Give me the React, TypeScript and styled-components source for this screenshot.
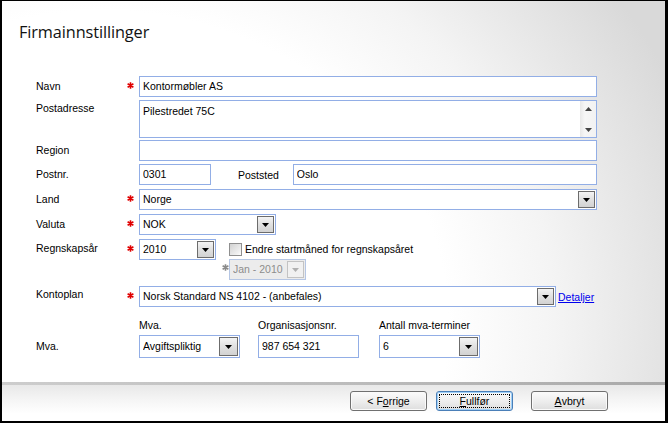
import React from "react";
import styled, { createGlobalStyle } from "styled-components";

const Global = createGlobalStyle`
  html, body { margin: 0; padding: 0; background: #fff; }
  body { font-family: "Liberation Sans", Arial, sans-serif; font-size: 10.5px; color: #000; }
  * { box-sizing: border-box; }
`;

const Window = styled.div`
  width: 668px;
  height: 423px;
  border-style: solid;
  border-color: #000;
  border-width: 1px 3px 2px 2px;
  display: flex;
  flex-direction: column;
  overflow: hidden;
`;

const Main = styled.div`
  flex: 1;
  background: radial-gradient(ellipse 95% 150% at 15% 85%, #ffffff 55%, #f4f4f4 72%, #d9d9d9 100%);
  display: flex;
  flex-direction: column;
`;

const Title = styled.h1`
  margin: 0;
  height: 75px;
  padding: 20px 0 0 17px;
  font-family: "Open Sans", "Noto Sans", sans-serif;
  font-weight: 400;
  font-size: 16.3px;
  letter-spacing: -0.1px;
  color: #111;
`;

const Form = styled.div`
  padding-left: 34px;
  width: 595px;
  display: flex;
  flex-direction: column;
`;

const Row = styled.div<{ $mt: number }>`
  display: grid;
  grid-template-columns: 94px 9px 1fr;
  margin-top: ${(p) => p.$mt}px;
`;

const Label = styled.div<{ $align?: string; $pt?: number; $pb?: number }>`
  align-self: ${(p) => p.$align || "center"};
  padding-top: ${(p) => p.$pt || 0}px;
  padding-bottom: ${(p) => p.$pb || 0}px;
  line-height: 13px;
  white-space: nowrap;
`;

const Star = styled.span`
  align-self: start;
  display: block;
  width: 7px;
  height: 7px;
  margin-top: 3px;
  margin-left: -3px;
`;

const Controls = styled.div<{ $align?: string }>`
  display: flex;
  align-items: ${(p) => p.$align || "center"};
`;

const Field = styled.div<{ $w?: number; $h?: number; $disabled?: boolean; $ml?: number }>`
  ${(p) => (p.$w ? `width: ${p.$w}px;` : "flex: 1;")}
  height: ${(p) => p.$h || 21}px;
  margin-left: ${(p) => p.$ml || 0}px;
  border: 1px solid ${(p) => (p.$disabled ? "#b5c6e4" : "#92aee6")};
  background: ${(p) => (p.$disabled ? "#ececec" : "#fff")};
  color: ${(p) => (p.$disabled ? "#8d8d8d" : "#000")};
  display: flex;
  align-items: center;
  padding: 0 1px 0 3px;
  line-height: 13px;
  white-space: nowrap;
`;

const FieldText = styled.span`
  flex: 1;
  overflow: hidden;
`;

const TextArea = styled(Field)`
  align-items: stretch;
  padding: 0 0 0 3px;
`;

const AreaText = styled.span`
  flex: 1;
  padding-top: 4px;
`;

const ScrollBar = styled.div`
  width: 16px;
  background: linear-gradient(to right, #e8e8e8, #f6f6f6 30%, #f2f2f2);
  display: flex;
  flex-direction: column;
  justify-content: space-between;
  align-items: center;
  padding: 6px 0 5px;
`;

const DropBtn = styled.div<{ $disabled?: boolean; $size?: number }>`
  width: ${(p) => p.$size || 17}px;
  height: ${(p) => p.$size || 17}px;
  border: 1px solid ${(p) => (p.$disabled ? "#c3c3c3" : "#6c6c6c")};
  background: ${(p) =>
    p.$disabled ? "#f1f1f1" : "linear-gradient(#f4f4f4, #e2e2e2 45%, #d2d2d2)"};
  display: flex;
  align-items: center;
  justify-content: center;
  padding-top: 1px;
`;

const Inline = styled.span<{ $ml: number }>`
  margin-left: ${(p) => p.$ml}px;
  white-space: nowrap;
`;

const RightBlock = styled.div`
  display: flex;
  flex-direction: column;
  margin-left: 6px;
`;

const CheckLine = styled.div`
  height: 20px;
  display: flex;
  align-items: center;
  padding-left: 7px;
  gap: 3px;
`;

const CheckBox = styled.div`
  width: 13px;
  height: 13px;
  border: 1px solid #8f8f8f;
  background: linear-gradient(135deg, #d2d2d2, #f2f2f2 80%, #fff);
`;

const SubLine = styled.div`
  display: flex;
  align-items: flex-start;
`;

const SmallStar = styled.span`
  width: 7px;
  margin-top: 2px;
`;

const Link = styled.a`
  color: #0000ee;
  text-decoration: underline;
  margin-left: 2px;
  padding-top: 5px;
  line-height: 13px;
`;

const Groups = styled.div`
  display: flex;
`;

const Group = styled.div<{ $ml: number }>`
  display: flex;
  flex-direction: column;
  margin-left: ${(p) => p.$ml}px;
`;

const Caption = styled.div`
  line-height: 13px;
  height: 16px;
`;

const Spacer = styled.div`
  flex: 1;
`;

const Separator = styled.div`
  height: 3px;
  background: linear-gradient(to right, #cdcdcd, #b9b9b9 60%, #a9a9a9);
`;

const Footer = styled.div`
  height: 36px;
  background: linear-gradient(#e8e8e8, #f6f6f6 45%, #fff 80%);
  display: flex;
  justify-content: flex-end;
  align-items: flex-start;
  padding: 6px 57px 0 0;
`;

const Button = styled.button<{ $ml: number; $focus?: boolean }>`
  width: 77px;
  height: 20px;
  margin-left: ${(p) => p.$ml}px;
  border: 1px solid ${(p) => (p.$focus ? "#4a7fb8" : "#707070")};
  border-radius: 3px;
  background: linear-gradient(#fbfbfb, #eeeeee 50%, #dedede);
  box-shadow: ${(p) => (p.$focus ? "inset 0 0 0 1px #9fd0f8" : "inset 0 0 0 1px #fafafa")};
  font-family: "Liberation Sans", Arial, sans-serif;
  font-size: 10.5px;
  color: #000;
  padding: 2px;
  display: flex;
`;

const BtnInner = styled.span<{ $focus?: boolean }>`
  flex: 1;
  display: flex;
  align-items: center;
  justify-content: center;
  border: 1px dotted ${(p) => (p.$focus ? "#000" : "transparent")};
  line-height: 12px;
`;

const Tri = ({ color = "#000", up = false }: { color?: string; up?: boolean }) => (
  <svg width="7" height="4" viewBox="0 0 7 4">
    {up ? <path d="M3.5 0 L7 4 L0 4 Z" fill={color} /> : <path d="M0 0 L7 0 L3.5 4 Z" fill={color} />}
  </svg>
);

const AsteriskIcon = ({ color }: { color: string }) => (
  <svg width="7" height="7" viewBox="0 0 7 7">
    <path d="M3.5 0.2 V6.8 M0.6 1.8 L6.4 5.2 M0.6 5.2 L6.4 1.8" stroke={color} strokeWidth="1.6" />
  </svg>
);

const Combo = ({
  value,
  w,
  h,
  disabled,
}: {
  value: string;
  w?: number;
  h?: number;
  disabled?: boolean;
}) => (
  <Field $w={w} $h={h} $disabled={disabled}>
    <FieldText>{value}</FieldText>
    <DropBtn $disabled={disabled} $size={h ? h - 4 : 17}>
      <Tri color={disabled ? "#b0b0b0" : "#000"} />
    </DropBtn>
  </Field>
);

const Req = () => (
  <Star>
    <AsteriskIcon color="#e00000" />
  </Star>
);

export default function App() {
  return (
    <>
      <Global />
      <Window>
        <Main>
          <Title>Firmainnstillinger</Title>
          <Form>
            <Row $mt={0}>
              <Label>Navn</Label>
              <Req />
              <Field>
                <FieldText>Kontormøbler AS</FieldText>
              </Field>
            </Row>
            <Row $mt={3}>
              <Label $align="start" $pt={2}>Postadresse</Label>
              <span />
              <TextArea $h={38}>
                <AreaText>Pilestredet 75C</AreaText>
                <ScrollBar>
                  <Tri color="#444" up />
                  <Tri color="#444" />
                </ScrollBar>
              </TextArea>
            </Row>
            <Row $mt={2}>
              <Label>Region</Label>
              <span />
              <Field />
            </Row>
            <Row $mt={3}>
              <Label>Postnr.</Label>
              <span />
              <Controls>
                <Field $w={72}>
                  <FieldText>0301</FieldText>
                </Field>
                <Inline $ml={27}>Poststed</Inline>
                <Field $ml={14}>
                  <FieldText>Oslo</FieldText>
                </Field>
              </Controls>
            </Row>
            <Row $mt={4}>
              <Label>Land</Label>
              <Req />
              <Combo value="Norge" />
            </Row>
            <Row $mt={4}>
              <Label>Valuta</Label>
              <Req />
              <Controls>
                <Combo value="NOK" w={137} />
              </Controls>
            </Row>
            <Row $mt={4}>
              <Label $align="start" $pt={3}>Regnskapsår</Label>
              <Req />
              <Controls $align="flex-start">
                <Combo value="2010" w={77} />
                <RightBlock>
                  <CheckLine>
                    <CheckBox />
                    <span>Endre startmåned for regnskapsåret</span>
                  </CheckLine>
                  <SubLine>
                    <SmallStar>
                      <AsteriskIcon color="#8a8a8a" />
                    </SmallStar>
                    <Combo value="Jan - 2010" w={77} disabled />
                  </SubLine>
                </RightBlock>
              </Controls>
            </Row>
            <Row $mt={6}>
              <Label $align="start" $pt={2}>Kontoplan</Label>
              <Req />
              <Controls $align="flex-start">
                <Combo value="Norsk Standard NS 4102 - (anbefales)" w={417} />
                <Link>Detaljer</Link>
              </Controls>
            </Row>
            <Row $mt={12}>
              <Label $align="end" $pb={5}>Mva.</Label>
              <span />
              <Groups>
                <Group $ml={0}>
                  <Caption>Mva.</Caption>
                  <Combo value="Avgiftspliktig" w={101} h={23} />
                </Group>
                <Group $ml={18}>
                  <Caption>Organisasjonsnr.</Caption>
                  <Field $w={101} $h={23}>
                    <FieldText>987 654 321</FieldText>
                  </Field>
                </Group>
                <Group $ml={20}>
                  <Caption>Antall mva-terminer</Caption>
                  <Combo value="6" w={101} h={23} />
                </Group>
              </Groups>
            </Row>
          </Form>
          <Spacer />
        </Main>
        <Separator />
        <Footer>
          <Button $ml={0}>
            <BtnInner>
              &lt; F<u>o</u>rrige
            </BtnInner>
          </Button>
          <Button $ml={9} $focus>
            <BtnInner $focus>
              <u>F</u>ullfør
            </BtnInner>
          </Button>
          <Button $ml={18}>
            <BtnInner>
              <u>A</u>vbryt
            </BtnInner>
          </Button>
        </Footer>
      </Window>
    </>
  );
}
